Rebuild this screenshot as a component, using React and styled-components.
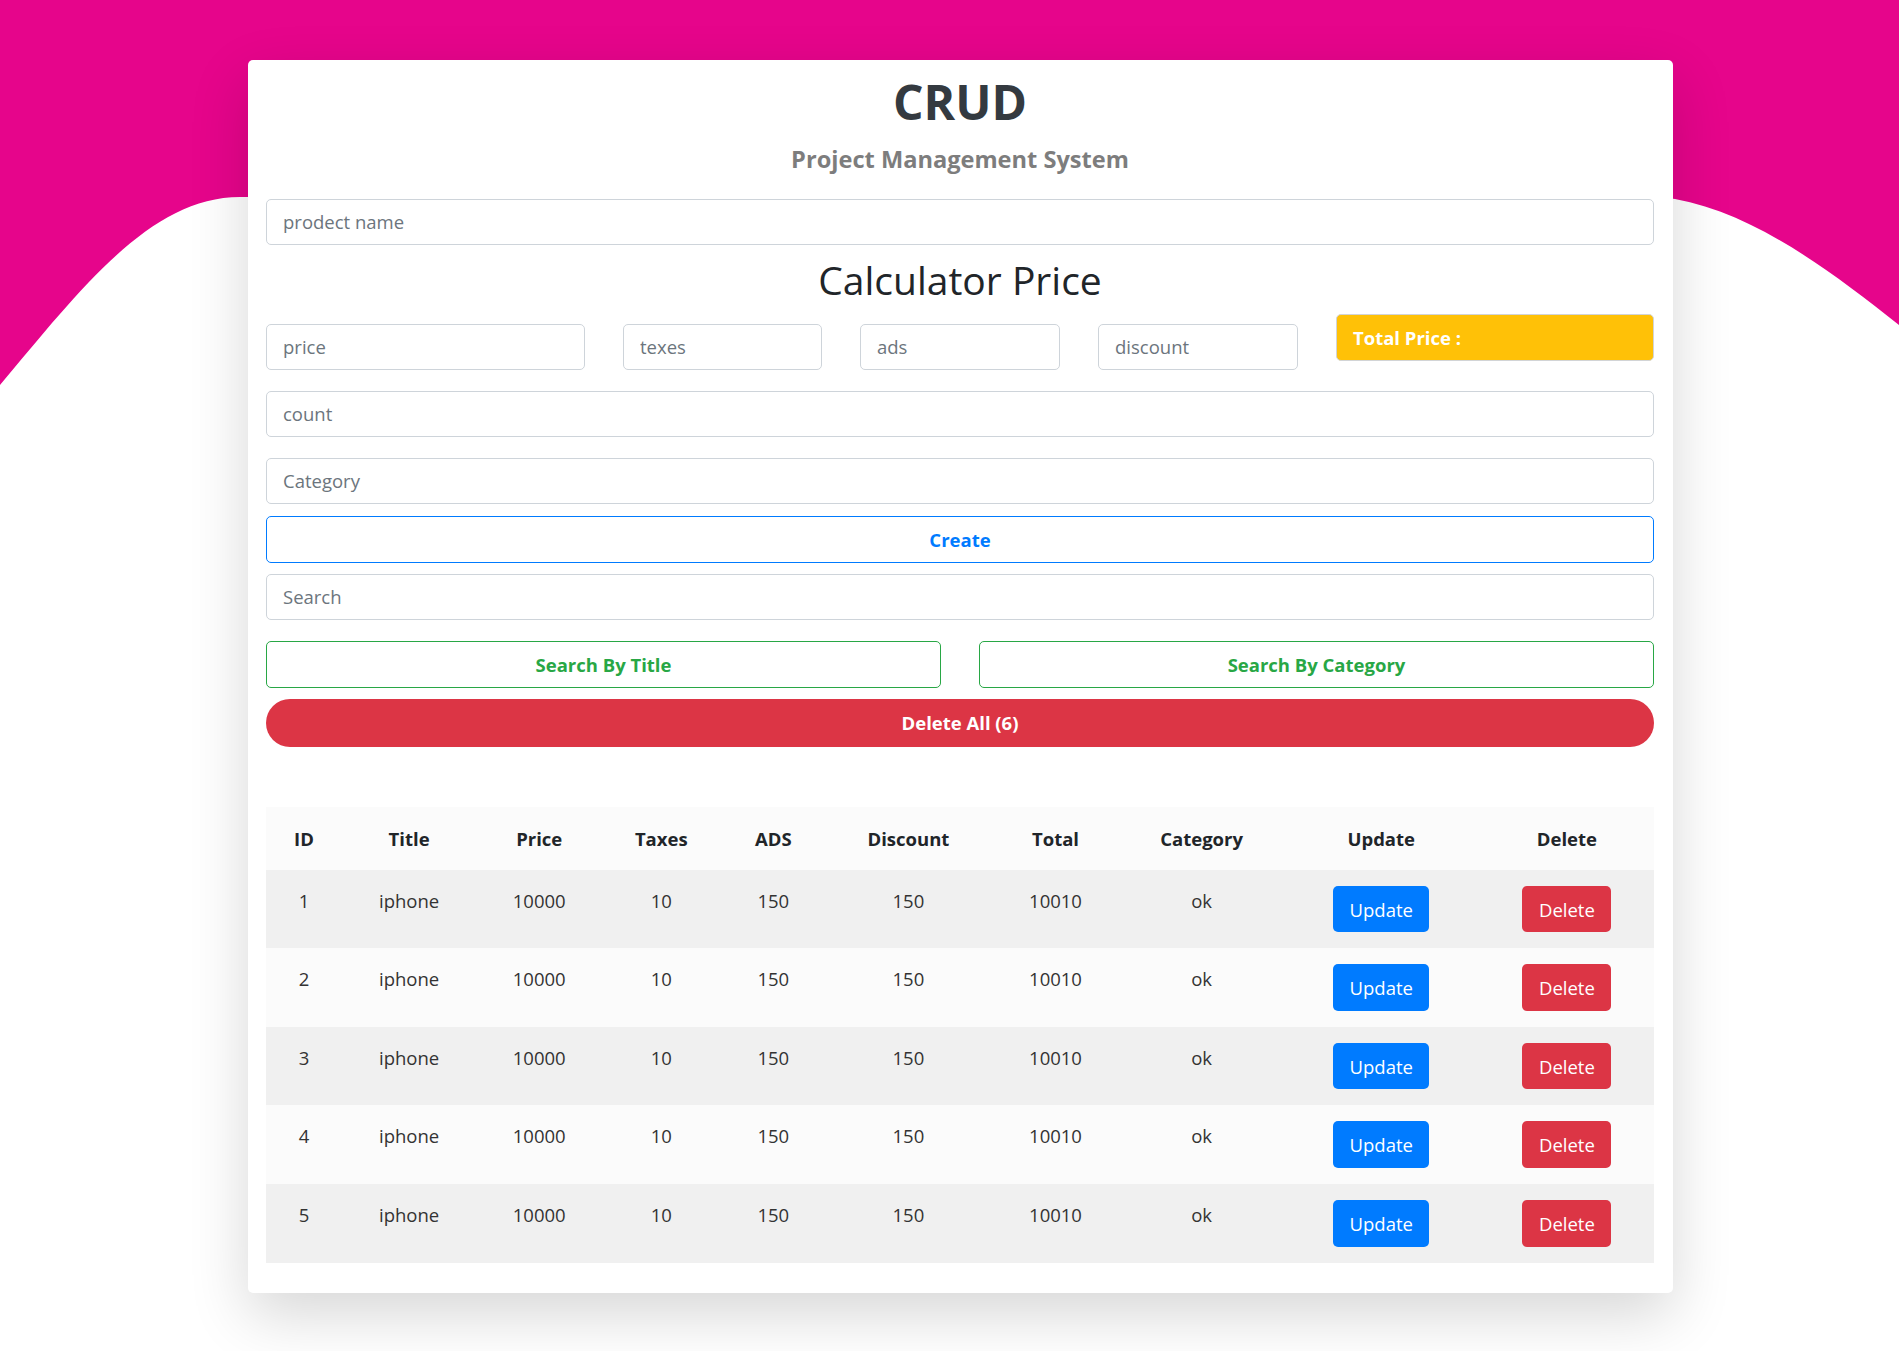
import React from "react";
import styled, { createGlobalStyle } from "styled-components";

const GlobalStyle = createGlobalStyle`
  html, body { margin: 0; padding: 0; background: #ffffff; }
  body { font-family: "Open Sans", "Liberation Sans", sans-serif; color: #212529; }
  * { box-sizing: border-box; }
`;

const Page = styled.div`
  position: relative;
  min-height: 1351px;
  padding: 60px 226px 59px 248px;
  overflow: hidden;
`;

const Wave = styled.svg`
  position: absolute;
  left: 0;
  top: 0;
  width: 1899px;
  height: 400px;
  z-index: 0;
`;

const Card = styled.main`
  position: relative;
  z-index: 1;
  background: #ffffff;
  border-radius: 5px;
  padding: 0 19px 30px 18px;
  box-shadow: 0 22px 60px rgba(0, 0, 0, 0.16);
  display: flex;
  flex-direction: column;
`;

const Title = styled.h1`
  margin: 13px 0 0;
  text-align: center;
  font-size: 48px;
  line-height: 1.2;
  font-weight: 700;
  color: #343a40;
`;

const Subtitle = styled.h4`
  margin: 14px 0 0;
  text-align: center;
  font-size: 23.6px;
  line-height: 1.2;
  font-weight: 700;
  color: #7d7d7d;
`;

const SectionTitle = styled.h2`
  margin: 12px 0 0;
  text-align: center;
  font-size: 39px;
  line-height: 1.2;
  font-weight: 500;
  color: #212529;
`;

const Field = styled.input`
  display: block;
  width: 100%;
  height: 46px;
  margin-top: ${(p) => p.$mt || 0}px;
  padding: 0 16px;
  border: 1px solid #ced4da;
  border-radius: 5px;
  background: #fff;
  font-family: "Open Sans", "Liberation Sans", sans-serif;
  font-size: 18.5px;
  color: #495057;
  outline: none;
  &::placeholder { color: #6c757d; }
`;

const PriceRow = styled.div`
  margin-top: 10px;
  display: grid;
  grid-template-columns: 319px 199px 200px 200px 1fr;
  column-gap: 38px;
  align-items: start;
  & > input { margin-top: 10px; }
`;

const TotalBox = styled.div`
  height: 47px;
  display: flex;
  align-items: center;
  padding: 0 16px;
  background: #ffc107;
  border: 1px solid #d2d4d6;
  border-radius: 5px;
  color: #ffffff;
  font-weight: 700;
  font-size: 18.5px;
`;

const OutlineButton = styled.button`
  display: block;
  width: 100%;
  height: 47px;
  margin-top: ${(p) => p.$mt || 0}px;
  border: 1px solid ${(p) => p.$color};
  border-radius: 5px;
  background: #fff;
  color: ${(p) => p.$color};
  font-family: "Open Sans", "Liberation Sans", sans-serif;
  font-size: 18.5px;
  font-weight: 700;
  cursor: pointer;
`;

const SplitRow = styled.div`
  margin-top: 21px;
  display: grid;
  grid-template-columns: 1fr 1fr;
  column-gap: 38px;
`;

const PillButton = styled.button`
  display: block;
  width: 100%;
  height: 48px;
  margin-top: 11px;
  border: none;
  border-radius: 999px;
  background: #dc3545;
  color: #fff;
  font-family: "Open Sans", "Liberation Sans", sans-serif;
  font-size: 18.5px;
  font-weight: 700;
  cursor: pointer;
`;

const Table = styled.table`
  margin-top: 60px;
  width: 100%;
  border-collapse: collapse;
  table-layout: fixed;
  font-size: 18.5px;
`;

const HeadRow = styled.tr`
  background: #fbfbfb;
`;

const Th = styled.th`
  padding: 17px 4px;
  line-height: 29px;
  font-weight: 700;
  color: #212529;
  text-align: center;
  vertical-align: bottom;
`;

const Row = styled.tr`
  background: ${(p) => (p.$odd ? "#f0f0f0" : "#fbfbfb")};
`;

const Td = styled.td`
  padding: 16px 4px;
  line-height: 29px;
  color: #333;
  text-align: center;
  vertical-align: top;
`;

const SmallButton = styled.button`
  height: 46.6px;
  padding: 0 16.5px;
  border: none;
  border-radius: 5px;
  background: ${(p) => p.$bg};
  color: #fff;
  font-family: "Open Sans", "Liberation Sans", sans-serif;
  font-size: 18.5px;
  cursor: pointer;
`;

const columns = [
  ["ID", 76],
  ["Title", 134],
  ["Price", 126],
  ["Taxes", 118],
  ["ADS", 106],
  ["Discount", 164],
  ["Total", 130],
  ["Category", 162],
  ["Update", 197],
  ["Delete", 174],
];

const rows = [1, 2, 3, 4, 5].map((id) => ({
  id,
  title: "iphone",
  price: 10000,
  taxes: 10,
  ads: 150,
  discount: 150,
  total: 10010,
  category: "ok",
}));

export default function App() {
  return (
    <>
      <GlobalStyle />
      <Page>
        <Wave viewBox="0 0 1899 400" preserveAspectRatio="none" aria-hidden="true">
          <path
            d="M0 0 H1899 V325 C1820 262 1740 205 1660 197 L240 197 C150 197 80 290 0 385 Z"
            fill="#e6058b"
          />
        </Wave>
        <Card>
          <Title>CRUD</Title>
          <Subtitle>Project Management System</Subtitle>
          <Field $mt={26} placeholder="prodect name" />
          <SectionTitle>Calculator Price</SectionTitle>
          <PriceRow>
            <Field placeholder="price" />
            <Field placeholder="texes" />
            <Field placeholder="ads" />
            <Field placeholder="discount" />
            <TotalBox>Total Price :</TotalBox>
          </PriceRow>
          <Field $mt={21} placeholder="count" />
          <Field $mt={21} placeholder="Category" />
          <OutlineButton $mt={12} $color="#007bff">Create</OutlineButton>
          <Field $mt={11} placeholder="Search" />
          <SplitRow>
            <OutlineButton $color="#28a745">Search By Title</OutlineButton>
            <OutlineButton $color="#28a745">Search By Category</OutlineButton>
          </SplitRow>
          <PillButton>Delete All (6)</PillButton>
          <Table>
            <colgroup>
              {columns.map(([name, w]) => (
                <col key={name} style={{ width: w }} />
              ))}
            </colgroup>
            <thead>
              <HeadRow>
                {columns.map(([name]) => (
                  <Th key={name}>{name}</Th>
                ))}
              </HeadRow>
            </thead>
            <tbody>
              {rows.map((r, i) => (
                <Row key={r.id} $odd={i % 2 === 0}>
                  <Td>{r.id}</Td>
                  <Td>{r.title}</Td>
                  <Td>{r.price}</Td>
                  <Td>{r.taxes}</Td>
                  <Td>{r.ads}</Td>
                  <Td>{r.discount}</Td>
                  <Td>{r.total}</Td>
                  <Td>{r.category}</Td>
                  <Td>
                    <SmallButton $bg="#007bff">Update</SmallButton>
                  </Td>
                  <Td>
                    <SmallButton $bg="#dc3545">Delete</SmallButton>
                  </Td>
                </Row>
              ))}
            </tbody>
          </Table>
        </Card>
      </Page>
    </>
  );
}
